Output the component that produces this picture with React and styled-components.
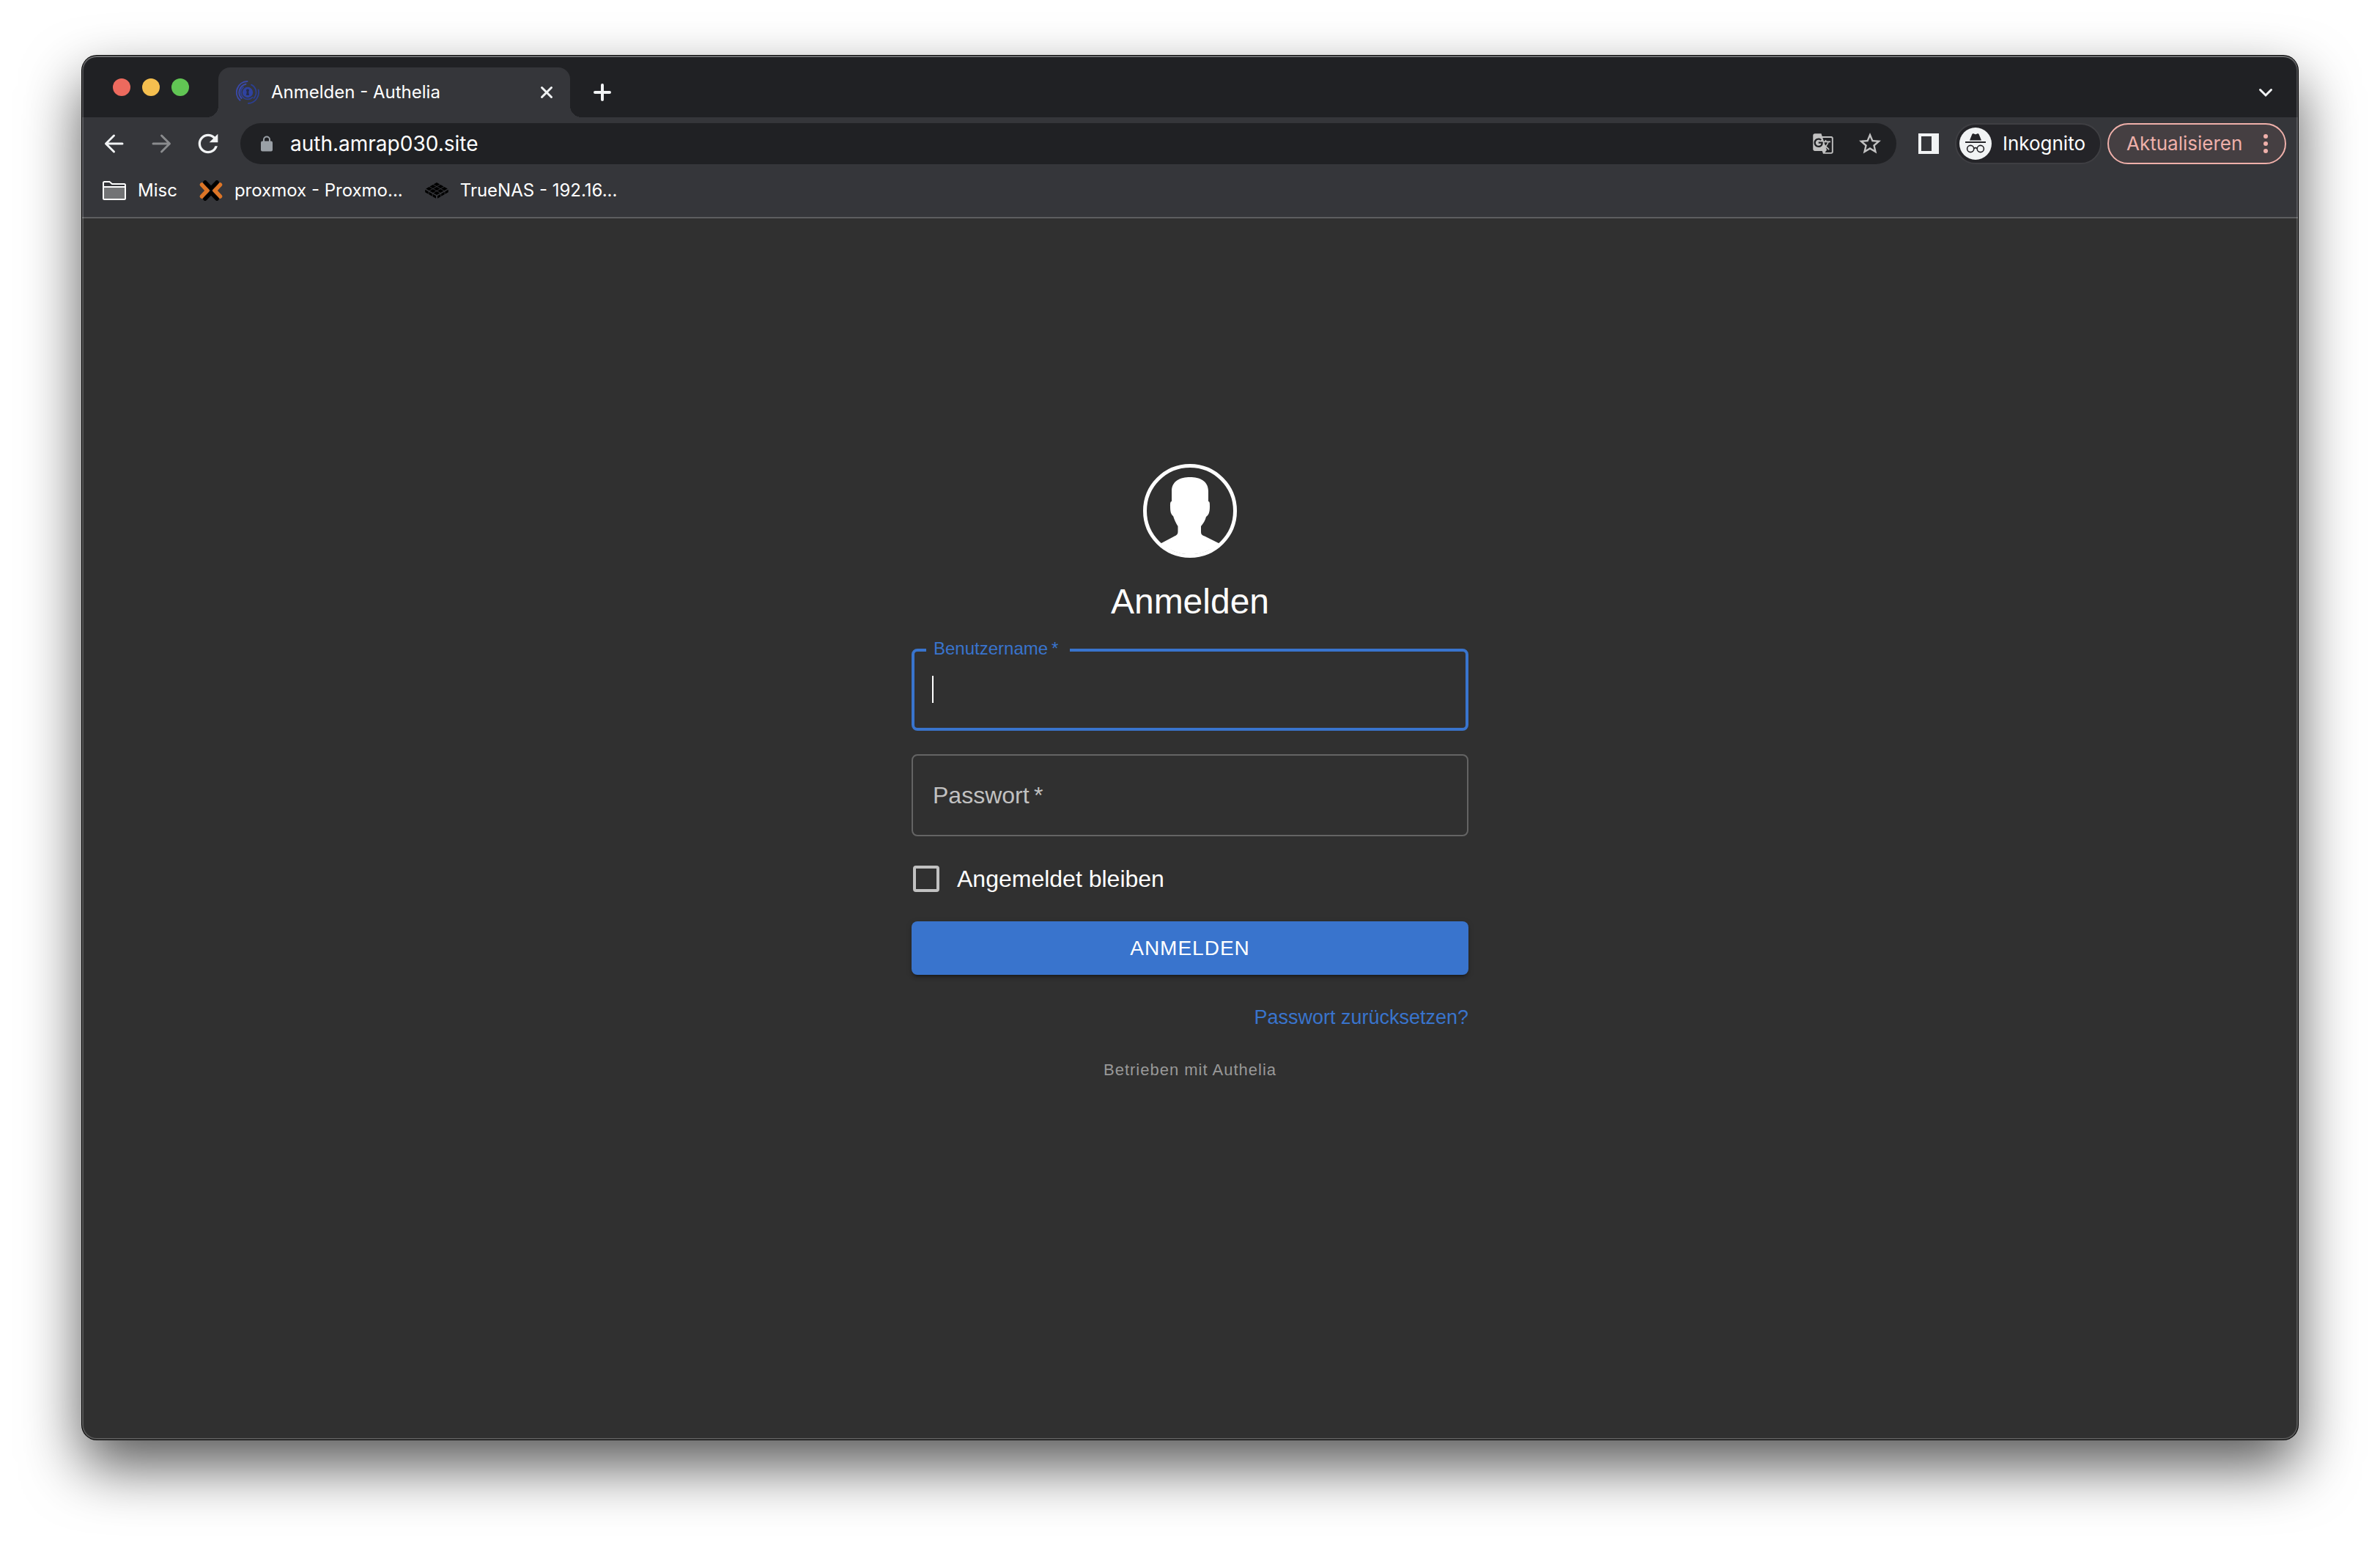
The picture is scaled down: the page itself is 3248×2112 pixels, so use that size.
import React from "react";
import styled, { createGlobalStyle, css } from "styled-components";
import { MdGTranslate, MdOutlineStarBorder, MdRefresh } from "react-icons/md";

const color = {
  frame: "#202124",
  toolbar: "#35363a",
  page: "#303030",
  line: "#5d5e60",
  text: "#ffffff",
  icon: "#f1f3f4",
  muted: "#8a8b8d",
  soft: "#c1c1c1",
  primary: "#3974cd",
  update: "#efb0aa",
};

const GlobalStyle = createGlobalStyle`
  *, *::before, *::after { box-sizing: border-box; }
  body {
    margin: 0;
    background: #ffffff;
    font-family: Inter, "Noto Sans", sans-serif;
  }
  button, input { font: inherit; color: inherit; }
  svg { display: block; flex: none; }
`;

const Desktop = styled.div`
  display: flex;
  min-height: 100vh;
  padding: 76px 112px 148px;
`;

const BrowserWindow = styled.div`
  position: relative;
  flex: 1;
  min-width: 0;
  display: flex;
  flex-direction: column;
  overflow: hidden;
  border-radius: 20px;
  background: ${color.page};
  box-shadow: 0 0 0 1px #000, 0 36px 80px rgba(0, 0, 0, 0.66);

  &::after {
    content: "";
    position: absolute;
    inset: 0;
    border-radius: inherit;
    box-shadow: inset 0 0 0 2px rgba(255, 255, 255, 0.19),
      inset 0 2px 0 rgba(255, 255, 255, 0.2);
    pointer-events: none;
  }
`;

const bareButton = css`
  display: flex;
  align-items: center;
  justify-content: center;
  padding: 0;
  border: 0;
  background: none;
  color: ${color.icon};
`;

const TabStrip = styled.header`
  display: flex;
  height: 84px;
  padding: 16px 28px 0 42px;
  background: ${color.frame};
`;

const WindowControls = styled.div`
  display: flex;
  gap: 16px;
  height: 54px;
  align-items: center;
  margin-right: 40px;
`;

const Light = styled.button`
  width: 24px;
  height: 24px;
  padding: 0;
  border: 0;
  border-radius: 50%;
  background: ${(p) => p.$fill};
`;

const Tab = styled.div`
  position: relative;
  display: flex;
  align-items: center;
  width: 480px;
  padding: 0 16px 0 24px;
  border-radius: 16px 16px 0 0;
  background: ${color.toolbar};

  &::before,
  &::after {
    content: "";
    position: absolute;
    bottom: 0;
    width: 16px;
    height: 16px;
  }
  &::before {
    right: 100%;
    background: radial-gradient(circle at 0 0, transparent 16px, ${color.toolbar} 16px);
  }
  &::after {
    left: 100%;
    background: radial-gradient(circle at 100% 0, transparent 16px, ${color.toolbar} 16px);
  }
`;

const TabTitle = styled.span`
  flex: 1;
  margin-left: 16px;
  font-size: 24px;
  line-height: 32px;
  color: ${color.text};
  white-space: nowrap;
`;

const IconButton = styled.button`
  ${bareButton}
  width: 32px;
  height: 32px;
  color: ${(p) => p.$color || color.icon};
`;

const StripButton = styled(IconButton)`
  align-self: center;
  margin-left: ${(p) => (p.$end ? "auto" : "28px")};
`;

const Toolbar = styled.div`
  display: flex;
  align-items: center;
  height: 64px;
  padding: 8px 16px 0 28px;
  background: ${color.toolbar};
`;

const NavButtons = styled.nav`
  display: flex;
  gap: 32px;
  margin-right: 28px;
`;

const Omnibox = styled.div`
  flex: 1;
  display: flex;
  align-items: center;
  gap: 20px;
  height: 56px;
  padding: 0 20px 0 28px;
  border-radius: 28px;
  background: ${color.frame};
`;

const Address = styled.input`
  flex: 1;
  min-width: 0;
  padding: 0;
  margin-left: 4px;
  border: 0;
  outline: 0;
  background: none;
  color: ${color.text};
  font-size: 28px;
  line-height: 40px;
`;

const OmniboxActions = styled.div`
  display: flex;
  gap: 32px;
`;

const SidePanelButton = styled(IconButton)`
  margin: 0 20px 0 28px;
`;

const Pill = styled.button`
  ${bareButton}
  height: 56px;
  border-radius: 28px;
  border: 2px solid ${(p) => (p.$update ? color.update : "#3f3f43")};
  background: ${(p) => (p.$update ? "#453f42" : "#242428")};
  color: ${(p) => (p.$update ? color.update : color.text)};
  width: ${(p) => (p.$update ? "244px" : "200px")};
  justify-content: space-between;
  padding: ${(p) => (p.$update ? "0 10px 0 24px" : "0 20px 0 4px")};
  margin-right: ${(p) => (p.$update ? "0" : "8px")};
  font-size: 26px;
  line-height: 32px;
`;

const BookmarkBar = styled.nav`
  display: flex;
  align-items: center;
  gap: 30px;
  height: 74px;
  padding: 0 28px;
  border-bottom: 2px solid ${color.line};
  background: ${color.toolbar};
`;

const Bookmark = styled.a`
  display: flex;
  align-items: center;
  gap: 16px;
  color: ${color.text};
  font-size: 24px;
  line-height: 32px;
  text-decoration: none;
  white-space: nowrap;
`;

const Page = styled.main`
  flex: 1;
  display: flex;
  flex-direction: column;
  align-items: center;
  padding: 335px 32px 64px;
  color: ${color.text};
  font-family: "Liberation Sans", Arial, sans-serif;
`;

const LoginForm = styled.form`
  display: flex;
  flex-direction: column;
  align-items: center;
  width: 100%;
  max-width: 760px;
`;

const Title = styled.h1`
  margin: 28px 0 32px;
  font-size: 48px;
  line-height: 64px;
  font-weight: 400;
`;

const Field = styled.div`
  position: relative;
  width: 100%;
  margin-bottom: ${(p) => (p.$last ? "16px" : "32px")};
`;

const FieldInput = styled.input`
  display: block;
  width: 100%;
  height: 112px;
  padding: 0 28px;
  border: ${(p) => (p.$active ? `4px solid ${color.primary}` : "2px solid #646464")};
  border-radius: 8px;
  outline: 0;
  background: none;
  caret-color: transparent;
  font-size: 32px;
`;

const FieldLabel = styled.label`
  position: absolute;
  pointer-events: none;
  white-space: pre;
  ${(p) =>
    p.$active
      ? css`
          top: -12px;
          left: 20px;
          padding: 0 16px 0 10px;
          background: ${color.page};
          color: ${color.primary};
          font-size: 24px;
          line-height: 24px;
        `
      : css`
          top: 36px;
          left: 29px;
          color: ${color.soft};
          font-size: 32px;
          line-height: 40px;
        `}
`;

const Caret = styled.span`
  position: absolute;
  top: 37px;
  left: 28px;
  width: 2px;
  height: 37px;
  background: ${color.text};
`;

const Remember = styled.label`
  display: flex;
  align-items: center;
  align-self: flex-start;
  gap: 24px;
  height: 84px;
  margin: 0 0 16px 2px;
  font-size: 32px;
  line-height: 48px;
`;

const Checkbox = styled.input`
  appearance: none;
  width: 36px;
  height: 36px;
  margin: 0;
  border: 4px solid ${color.soft};
  border-radius: 4px;
`;

const SubmitButton = styled.button`
  width: 100%;
  height: 73px;
  border: 0;
  border-radius: 8px;
  background: ${color.primary};
  color: ${color.text};
  font-size: 28px;
  line-height: 48px;
  letter-spacing: 1px;
  text-transform: uppercase;
  box-shadow: 0 6px 2px -4px rgba(0, 0, 0, 0.2), 0 4px 4px rgba(0, 0, 0, 0.14),
    0 2px 10px rgba(0, 0, 0, 0.12);
`;

const ResetLink = styled.a`
  align-self: flex-end;
  margin-top: 38px;
  color: ${color.primary};
  font-size: 27px;
  line-height: 40px;
  text-decoration: none;
`;

const PoweredBy = styled.a`
  margin-top: 32px;
  color: #989898;
  font-size: 22px;
  line-height: 40px;
  letter-spacing: 1px;
  text-decoration: none;
`;

const Stroke = ({ size = 32, width = 3, children }) => (
  <svg
    width={size}
    height={size}
    viewBox={`0 0 ${size} ${size}`}
    fill="none"
    stroke="currentColor"
    strokeWidth={width}
    strokeLinecap="round"
    aria-hidden="true"
  >
    {children}
  </svg>
);

const BackIcon = () => (
  <Stroke>
    <path d="M5 16H27M15.5 5L4.5 16L15.5 27" strokeLinejoin="round" />
  </Stroke>
);

const ForwardIcon = () => (
  <Stroke>
    <path d="M5 16H27M16.5 5L27.5 16L16.5 27" strokeLinejoin="round" />
  </Stroke>
);

const CloseIcon = () => (
  <Stroke>
    <path d="M9.5 9.5L22.5 22.5M22.5 9.5L9.5 22.5" />
  </Stroke>
);

const PlusIcon = () => (
  <Stroke width={4}>
    <path d="M16 6V26M6 16H26" />
  </Stroke>
);

const ChevronIcon = () => (
  <Stroke>
    <path d="M8.5 12.5L16 20L23.5 12.5" />
  </Stroke>
);

const LockIcon = () => (
  <svg width="16" height="22" viewBox="0 0 16 22" aria-hidden="true">
    <path d="M4 9V5.5a4 4 0 0 1 8 0V9" fill="none" stroke="#9aa0a6" strokeWidth="2" />
    <rect y="7.5" width="16" height="14" rx="2" fill="#9aa0a6" />
  </svg>
);

const SidePanelIcon = () => (
  <svg width="28" height="28" viewBox="0 0 28 28" aria-hidden="true">
    <path d="M0 0H28V28H0ZM4 4V24H18V4Z" fill="currentColor" fillRule="evenodd" />
  </svg>
);

const IncognitoIcon = () => (
  <svg width="44" height="44" viewBox="0 0 44 44" aria-hidden="true">
    <circle cx="22" cy="22" r="22" fill="#f1f3f4" />
    <path
      d="M14 17.5L17.2 9.4C17.6 8.4 18.3 8 19.3 8.3L21 8.9C21.7 9.2 22.3 9.2 23 8.9L24.7 8.3C25.7 8 26.4 8.4 26.8 9.4L30 17.5Z"
      fill="#242428"
    />
    <rect x="8" y="19" width="28" height="2" fill="#242428" />
    <g fill="none" stroke="#242428" strokeWidth="1.6">
      <circle cx="15.2" cy="29" r="4.6" />
      <circle cx="28.8" cy="29" r="4.6" />
      <path d="M19.8 28.6Q22 26.8 24.2 28.6" />
    </g>
  </svg>
);

const MenuDots = () => (
  <svg width="32" height="32" viewBox="0 0 32 32" fill="currentColor" aria-hidden="true">
    <circle cx="16" cy="6" r="3" />
    <circle cx="16" cy="16" r="3" />
    <circle cx="16" cy="26" r="3" />
  </svg>
);

const AutheliaIcon = () => (
  <svg width="32" height="32" viewBox="0 0 32 32" fill="none" strokeLinecap="round" aria-hidden="true">
    <circle cx="16" cy="16" r="7.2" fill="#2f429f" />
    <path d="M16 11.5a2 2 0 0 1 1.2 3.6L18 20h-4l.8-4.9A2 2 0 0 1 16 11.5Z" fill="#252c4c" />
    <g stroke="#3a49a8" strokeWidth="2">
      <path d="M15.5 1A15 15 0 0 0 5.5 26.8" />
      <path d="M13.5 4.8A11.6 11.6 0 0 0 7.5 24" />
    </g>
    <g stroke="#2c3f93" strokeWidth="1.8">
      <path d="M10 9A9.400 9.400 0 0 0 16 25.400A9.400 9.400 0 0 0 22.500 22.800" />
      <path d="M21 5.600A11.600 11.600 0 0 1 24.500 23.800" />
      <path d="M30.600 12.500A15 15 0 0 1 17 31" />
    </g>
  </svg>
);

const FolderIcon = () => (
  <svg width="32" height="26" viewBox="0 0 32 26" aria-hidden="true">
    <path d="M1 8H31V24H1Z" fill="#727375" />
    <path
      d="M1 2.5Q1 1 2.5 1H9.5L13 4H29.5Q31 4 31 5.500V23.5Q31 25 29.500 25H2.500Q1 25 1 23.500ZM1 8H31"
      fill="none"
      stroke="#fff"
      strokeWidth="2"
    />
  </svg>
);

const ProxmoxIcon = () => (
  <svg width="32" height="28" viewBox="0 0 32 28" fill="none" strokeWidth="5.500" strokeLinecap="round" strokeLinejoin="round" aria-hidden="true">
    <path d="M3.500 6L11 14L3.500 22M28.500 6L21 14L28.500 22" stroke="#dd7526" />
    <path d="M8 2.800L16 11.200L24 2.800M8 25.200L16 16.800L24 25.200" stroke="#000" />
  </svg>
);

const tileSteps = [-1, 0, 1];

const TrueNasIcon = () => (
  <svg width="32" height="22" viewBox="0 0 32 22" fill="#000" aria-hidden="true">
    {tileSteps.map((i) =>
      tileSteps.map((j) => {
        const x = 16 + (i - j) * 5.2;
        const y = 8.6 + (i + j) * 3;
        return (
          <path key={`${i}${j}`} d={`M${x} ${y - 2.5}L${x + 4.4} ${y}L${x} ${y + 2.5}L${x - 4.4} ${y}Z`} />
        );
      })
    )}
    {tileSteps.map((i) => (
      <React.Fragment key={i}>
        <path d={`M${5.8 + i * 5.2} ${13.4 + i * 3}l4.4 2.500v3.400l-4.400 -2.500Z`} transform="translate(-0.400 -0.600)" />
        <path d={`M${26.200 + i * 5.200} ${13.400 - i * 3}l-4.400 2.500v3.400l4.400 -2.500Z`} transform="translate(0.400 -0.600)" />
      </React.Fragment>
    ))}
  </svg>
);

const UserIcon = () => (
  <svg width="128" height="128" viewBox="0 0 128 128" aria-hidden="true">
    <circle cx="64" cy="64" r="61.5" fill="none" stroke="#fff" strokeWidth="5" />
    <path
      d="M64 18C51 18 39 23 39 37V51C37 51 37 54 37 58C37 65 38 69 41 71C43 77 45 81 47.500 85V92C47.500 96 46 97 42 99L24 108.500A61 61 0 0 0 104 108.500L84 98.500C80 97 79 96 79 92V85C82 81 85 77 86 72C89 70 91 67 91 58C91 54 91 51 89 51V37C89 23 77 18 64 18Z"
      fill="#fff"
    />
  </svg>
);

export default function App() {
  return (
    <>
      <GlobalStyle />
      <Desktop>
        <BrowserWindow>
          <TabStrip>
            <WindowControls>
              <Light $fill="#ed6a5e" aria-label="Schließen" />
              <Light $fill="#f5bf4f" aria-label="Minimieren" />
              <Light $fill="#61c554" aria-label="Maximieren" />
            </WindowControls>
            <Tab>
              <AutheliaIcon />
              <TabTitle>Anmelden - Authelia</TabTitle>
              <IconButton aria-label="Tab schließen">
                <CloseIcon />
              </IconButton>
            </Tab>
            <StripButton aria-label="Neuer Tab">
              <PlusIcon />
            </StripButton>
            <StripButton $end aria-label="Tabs durchsuchen">
              <ChevronIcon />
            </StripButton>
          </TabStrip>

          <Toolbar>
            <NavButtons>
              <IconButton aria-label="Zurück">
                <BackIcon />
              </IconButton>
              <IconButton $color={color.muted} aria-label="Vorwärts">
                <ForwardIcon />
              </IconButton>
              <IconButton aria-label="Neu laden">
                <MdRefresh size={40} />
              </IconButton>
            </NavButtons>
            <Omnibox>
              <LockIcon />
              <Address aria-label="Adresse" defaultValue="auth.amrap030.site" />
              <OmniboxActions>
                <IconButton $color={color.soft} aria-label="Übersetzen">
                  <MdGTranslate size={30} />
                </IconButton>
                <IconButton $color={color.soft} aria-label="Lesezeichen">
                  <MdOutlineStarBorder size={36} />
                </IconButton>
              </OmniboxActions>
            </Omnibox>
            <SidePanelButton aria-label="Seitenleiste">
              <SidePanelIcon />
            </SidePanelButton>
            <Pill>
              <IncognitoIcon />
              Inkognito
            </Pill>
            <Pill $update>
              Aktualisieren
              <MenuDots />
            </Pill>
          </Toolbar>

          <BookmarkBar>
            <Bookmark href="#misc">
              <FolderIcon />
              Misc
            </Bookmark>
            <Bookmark href="#proxmox">
              <ProxmoxIcon />
              proxmox - Proxmo...
            </Bookmark>
            <Bookmark href="#truenas">
              <TrueNasIcon />
              TrueNAS - 192.16...
            </Bookmark>
          </BookmarkBar>

          <Page>
            <LoginForm onSubmit={(e) => e.preventDefault()}>
              <UserIcon />
              <Title>Anmelden</Title>
              <Field>
                <FieldInput id="username" type="text" $active />
                <FieldLabel htmlFor="username" $active>
                  {"Benutzername\u2009*"}
                </FieldLabel>
                <Caret />
              </Field>
              <Field $last>
                <FieldInput id="password" type="password" />
                <FieldLabel htmlFor="password">{"Passwort\u2009*"}</FieldLabel>
              </Field>
              <Remember>
                <Checkbox type="checkbox" />
                Angemeldet bleiben
              </Remember>
              <SubmitButton type="submit">Anmelden</SubmitButton>
              <ResetLink href="#reset">Passwort zurücksetzen?</ResetLink>
              <PoweredBy href="#authelia">Betrieben mit Authelia</PoweredBy>
            </LoginForm>
          </Page>
        </BrowserWindow>
      </Desktop>
    </>
  );
}
